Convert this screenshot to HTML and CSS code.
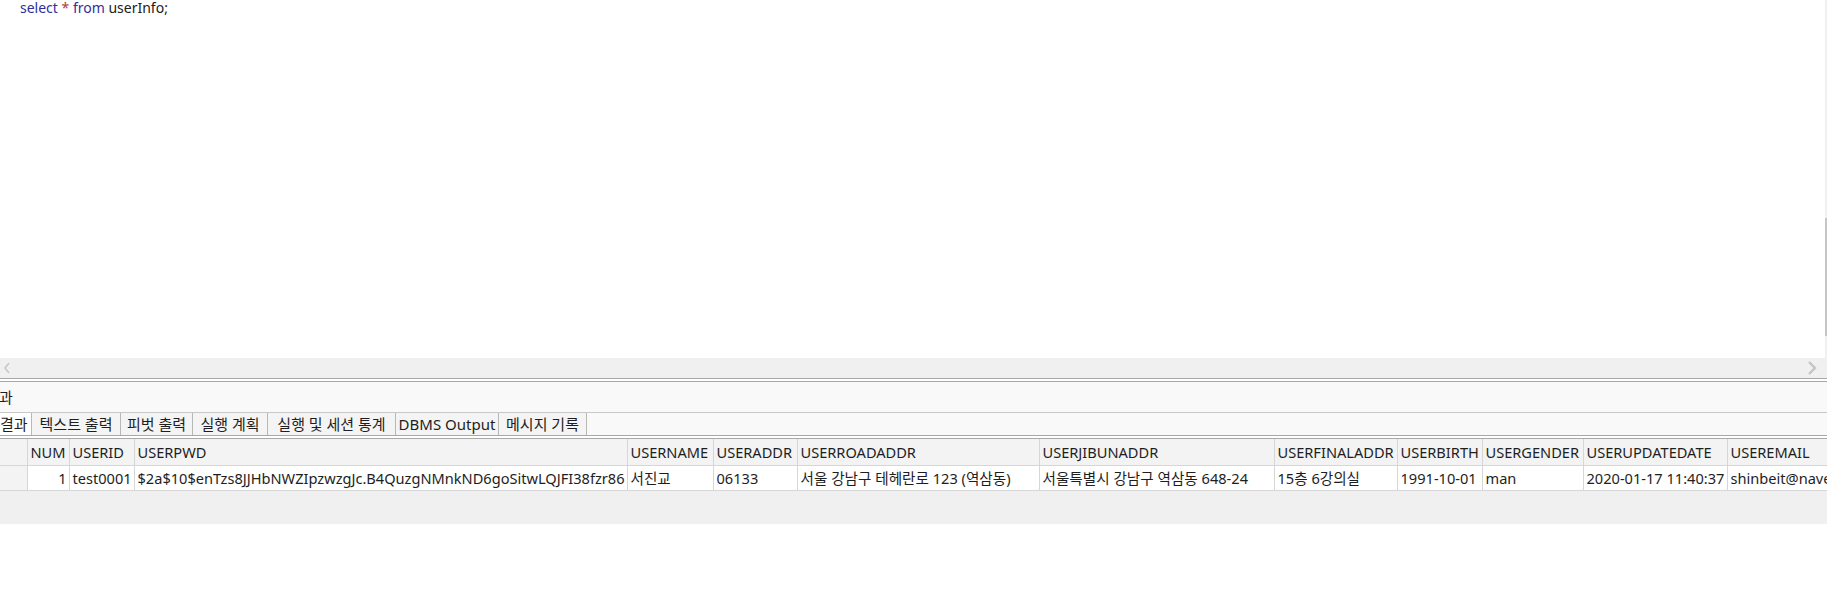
FILE: index.html
```html
<!DOCTYPE html>
<html lang="ko">
<head>
<meta charset="utf-8">
<title>userInfo</title>
<link rel="stylesheet" href="styles.css">
</head>
<body>
<div class="app">
  <div class="editor">
    <div class="code"><span class="kw">select</span> <span class="op">*</span> <span class="kw">from</span> <span class="id">userInfo;</span></div>
    <div class="vscroll"><div class="vthumb"></div></div>
  </div>
  <div class="hscroll">
    <svg class="arrow" width="8" height="12" viewBox="0 0 8 12"><path d="M6 1 L2 6 L6 11" fill="none" stroke="#c8c8c8" stroke-width="1.6"/></svg>
    <svg class="arrow" width="10" height="14" viewBox="0 0 10 14"><path d="M2 1 L8 7 L2 13" fill="none" stroke="#c4c4c4" stroke-width="2.4"/></svg>
  </div>
  <div class="sep"></div>
  <div class="label">과</div>
  <div class="tabs">
    <div class="tab active t1">결과</div>
    <div class="tab t2">텍스트 출력</div>
    <div class="tab t3">피벗 출력</div>
    <div class="tab t4">실행 계획</div>
    <div class="tab t5">실행 및 세션 통계</div>
    <div class="tab t6">DBMS Output</div>
    <div class="tab t7">메시지 기록</div>
  </div>
  <div class="sep"></div>
  <div class="gridwrap">
    <table class="grid">
      <colgroup>
        <col class="c-rn"><col class="c-num"><col class="c-id"><col class="c-pwd"><col class="c-name"><col class="c-addr"><col class="c-road"><col class="c-jibun"><col class="c-final"><col class="c-birth"><col class="c-gender"><col class="c-upd"><col class="c-email">
      </colgroup>
      <thead>
        <tr>
          <th class="rn"></th><th>NUM</th><th>USERID</th><th>USERPWD</th><th>USERNAME</th><th>USERADDR</th><th>USERROADADDR</th><th>USERJIBUNADDR</th><th>USERFINALADDR</th><th>USERBIRTH</th><th>USERGENDER</th><th>USERUPDATEDATE</th><th>USEREMAIL</th>
        </tr>
      </thead>
      <tbody>
        <tr>
          <td class="rn"></td><td class="num">1</td><td>test0001</td><td>$2a$10$enTzs8JJHbNWZIpzwzgJc.B4QuzgNMnkND6goSitwLQJFI38fzr86</td><td>서진교</td><td>06133</td><td>서울 강남구 테헤란로 123 (역삼동)</td><td>서울특별시 강남구 역삼동 648-24</td><td>15층 6강의실</td><td>1991-10-01</td><td>man</td><td>2020-01-17 11:40:37</td><td>shinbeit@naver.com</td>
        </tr>
      </tbody>
    </table>
    <div class="gridfill"></div>
  </div>
</div>
</body>
</html>
```

FILE: styles.css
```css
html, body {
  margin: 0;
  padding: 0;
  background: #ffffff;
}
body {
  width: 1827px;
  height: 595px;
  overflow: hidden;
  font-family: "Noto Sans", "Noto Sans CJK KR", sans-serif;
  color: #1e1e1e;
}
.app {
  display: flex;
  flex-direction: column;
  width: 1827px;
}
.editor {
  display: flex;
  height: 358px;
  background: #ffffff;
}
.code {
  flex: 1;
  padding-left: 20px;
  font-size: 14px;
  line-height: 16px;
  white-space: pre;
}
.kw { color: #2f2f9c; }
.op { color: #b23a3a; }
.id { color: #202020; }
.vscroll {
  width: 2px;
  background: #f0f0f0;
}
.vthumb {
  margin-top: 218px;
  height: 118px;
  background: #c6c6c6;
}
.hscroll {
  height: 20px;
  background: #f0f0f0;
  display: flex;
  align-items: center;
  justify-content: space-between;
  padding: 0 10px 0 3px;
}
.arrow { display: block; }
.sep {
  height: 2px;
  border-top: 1px solid #a8a8a8;
  border-bottom: 1px solid #a8a8a8;
  background: #ffffff;
}
.label {
  height: 30px;
  line-height: 30px;
  background: #f9f9f9;
  font-size: 15px;
  margin-left: -1px;
}
.tabs {
  display: flex;
  height: 22px;
  border-top: 1px solid #c8c8c8;
  background: #f9f9f9;
}
.tab {
  height: 22px;
  line-height: 22px;
  font-size: 15px;
  text-align: center;
  border-right: 1px solid #b8b8b8;
  background: #f4f4f4;
  box-sizing: border-box;
  white-space: nowrap;
  overflow: hidden;
}
.tab.active { background: #ffffff; }
.t1 { width: 32px; text-align: left; }
.t2 { width: 89px; }
.t3 { width: 72px; }
.t4 { width: 75px; }
.t5 { width: 128px; }
.t6 { width: 103px; }
.t7 { width: 88px; }
.gridwrap {
  overflow: hidden;
  width: 1827px;
}
.grid {
  border-collapse: collapse;
  table-layout: fixed;
  width: 1927px;
  font-size: 14.6px;
}
.grid th, .grid td {
  border: 1px solid #d6d6d6;
  padding: 0 2px 0 3px;
  white-space: nowrap;
  overflow: hidden;
  text-overflow: clip;
  text-align: left;
  font-weight: normal;
  box-sizing: border-box;
}
.grid th {
  height: 26px;
  background: #f3f3f3;
  border-top: none;
}
.grid td {
  height: 25px;
  background: #ffffff;
}
.grid th:first-child, .grid td:first-child { border-left: none; }
.grid td.rn, .grid th.rn { background: #f3f3f3; }
.grid td.num { text-align: right; }
.c-rn { width: 27px; }
.c-num { width: 42px; }
.c-id { width: 65px; }
.c-pwd { width: 493px; }
.c-name { width: 86px; }
.c-addr { width: 84px; }
.c-road { width: 242px; }
.c-jibun { width: 235px; }
.c-final { width: 123px; }
.c-birth { width: 85px; }
.c-gender { width: 101px; }
.c-upd { width: 144px; }
.c-email { width: 200px; }
.gridfill {
  height: 33px;
  background: #f0f0f0;
}
```
